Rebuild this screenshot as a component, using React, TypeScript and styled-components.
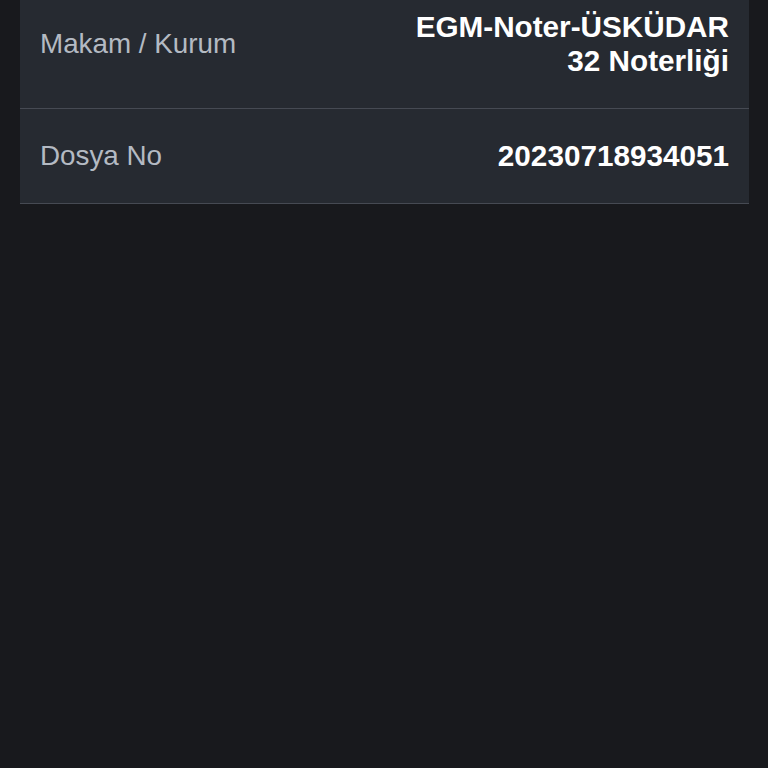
import React from 'react'
import styled, { createGlobalStyle } from 'styled-components'

const GlobalStyle = createGlobalStyle`
  html, body {
    margin: 0;
    padding: 0;
    background: #18191d;
    font-family: 'Liberation Sans', Arial, sans-serif;
  }
`

const Page = styled.div`
  min-height: 768px;
  padding: 0 19px 0 20px;
  background: #18191d;
  overflow: hidden;
`

const Card = styled.div`
  margin-top: -20px;
  background: #262a31;
`

const Row = styled.div`
  display: flex;
  justify-content: space-between;
  align-items: center;
  gap: 24px;
  padding: 30px 20px;
  border-bottom: 1px solid #464a53;
`

const Label = styled.span`
  color: #b4bac3;
  font-size: 27.8px;
  line-height: 34px;
  white-space: nowrap;
`

const Value = styled.span`
  color: #ffffff;
  font-size: 29.7px;
  font-weight: 700;
  line-height: 34px;
  text-align: right;
  max-width: 340px;
`

const rows = [
  { label: 'Makam / Kurum', value: 'EGM-Noter-ÜSKÜDAR 32 Noterliği' },
  { label: 'Dosya No', value: '20230718934051' },
]

export default function App() {
  return (
    <>
      <GlobalStyle />
      <Page>
        <Card>
          {rows.map((r) => (
            <Row key={r.label}>
              <Label>{r.label}</Label>
              <Value>{r.value}</Value>
            </Row>
          ))}
        </Card>
      </Page>
    </>
  )
}
